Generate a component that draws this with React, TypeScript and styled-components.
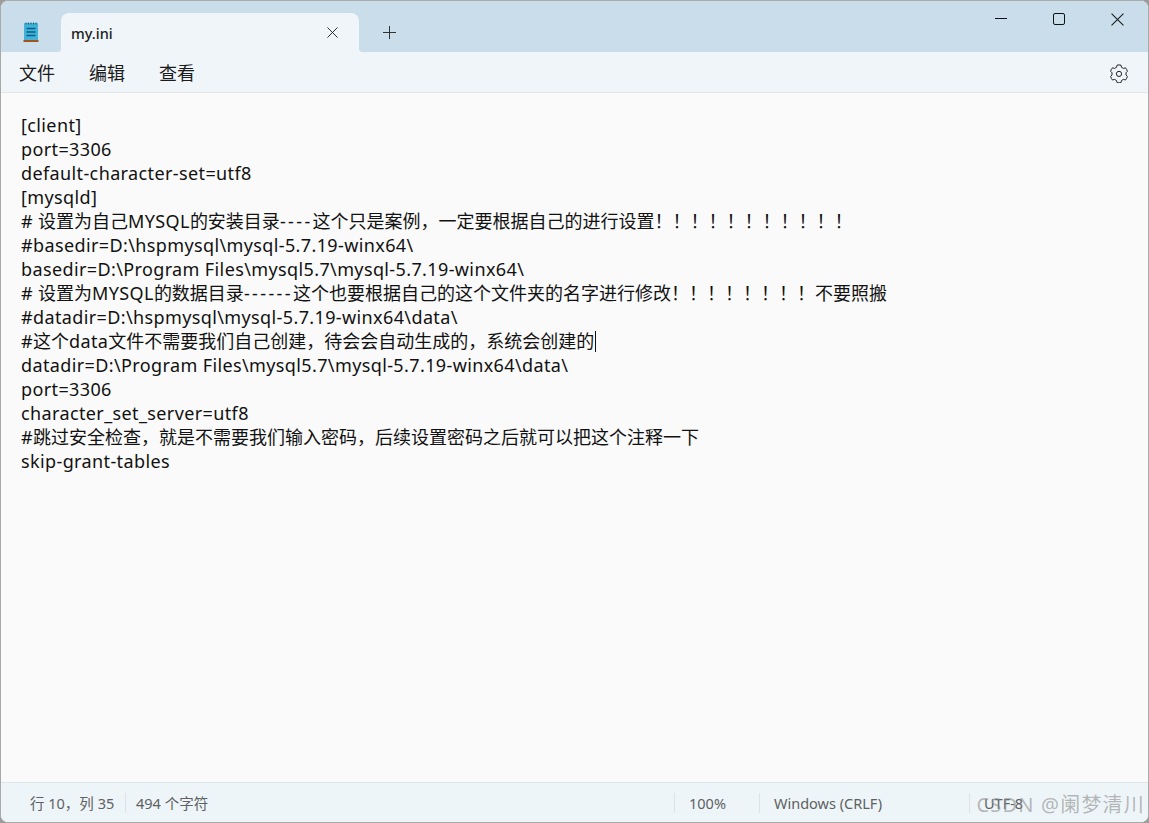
import React from "react";
import styled, { createGlobalStyle } from "styled-components";

const GlobalStyle = createGlobalStyle`
	html, body {
		margin: 0;
		padding: 0;
		background: #9c9c9c;
	}
	* {
		box-sizing: border-box;
	}
`;

const Window = styled.div`
	width: 1149px;
	height: 823px;
	position: relative;
	display: flex;
	flex-direction: column;
	overflow: hidden;
	border: 1px solid #a9a9a9;
	border-radius: 8px;
	background: #fafafa;
	font-family: "Noto Sans", "Open Sans", "Noto Sans CJK SC", sans-serif;
	color: #1b1b1b;
`;

const TitleBar = styled.div`
	height: 51px;
	flex: none;
	display: flex;
	align-items: flex-end;
	background: #c9deea;
`;

const AppIcon = styled.div`
	width: 60px;
	height: 51px;
	flex: none;
	display: flex;
	justify-content: center;
	padding: 21px 1px 0 0;
`;

const Tab = styled.div`
	width: 298px;
	height: 39px;
	flex: none;
	position: relative;
	display: flex;
	align-items: center;
	justify-content: space-between;
	padding: 0 21px 0 10px;
	background: #f0f5f9;
	border-radius: 8px 8px 0 0;
	font-size: 14.5px;
	font-weight: 500;

	&::before,
	&::after {
		content: "";
		position: absolute;
		bottom: 0;
		width: 4px;
		height: 4px;
	}

	&::before {
		left: -4px;
		background: radial-gradient(circle at 0 0, #c9deea 4px, #f0f5f9 4.5px);
	}

	&::after {
		right: -4px;
		background: radial-gradient(circle at 100% 0, #c9deea 4px, #f0f5f9 4.5px);
	}
`;

const NewTab = styled.div`
	width: 60px;
	height: 39px;
	flex: none;
	display: flex;
	align-items: center;
	justify-content: center;
`;

const WindowControls = styled.div`
	margin-left: auto;
	height: 51px;
	display: flex;
	align-items: flex-start;
	padding: 12px 24px 0 0;
	gap: 46px;
`;

const MenuBar = styled.div`
	height: 41px;
	flex: none;
	display: flex;
	align-items: center;
	justify-content: space-between;
	padding: 2px 20px 0 18px;
	background: #f0f5f9;
	border-bottom: 1px solid #e2e6e9;
`;

const MenuItems = styled.div`
	display: flex;
	gap: 34px;
`;

const MenuItem = styled.span`
	font-size: 18px;
	line-height: 24px;
`;

const Editor = styled.div`
	flex: 1;
	padding: 20px 20px 0;
	background: #fafafa;
`;

const Line = styled.div`
	height: 24px;
	font-size: 18px;
	line-height: 24px;
	white-space: pre;
	color: #111;
`;

const LatinRun = styled.span`
	letter-spacing: 0.38px;
`;

const DashRun = styled.span`
	letter-spacing: 2.38px;
`;

const Caret = styled.span`
	display: inline-block;
	width: 1px;
	height: 21px;
	margin-left: 1px;
	vertical-align: -4px;
	background: #111;
`;

const StatusBar = styled.div`
	height: 40px;
	flex: none;
	display: flex;
	align-items: center;
	padding-left: 29px;
	background: #eef5f8;
	border-top: 1px solid #dfe5e7;
	font-size: 14.5px;
	color: #5d6163;
`;

const StatusCell = styled.div<{ $width: number; $pad: number }>`
	width: ${({ $width }) => $width}px;
	height: 20px;
	flex: none;
	display: flex;
	align-items: center;
	padding-left: ${({ $pad }) => $pad}px;
	line-height: 20px;
	white-space: nowrap;

	& + & {
		border-left: 1px solid #dce2e5;
	}
`;

const Watermark = styled.div`
	position: absolute;
	right: 3px;
	bottom: 3px;
	font-size: 20px;
	line-height: 28px;
	letter-spacing: 1.2px;
	white-space: nowrap;
	color: rgba(140, 140, 140, 0.6);
`;

const lines = [
	"[client]",
	"port=3306",
	"default-character-set=utf8",
	"[mysqld]",
	"# 设置为自己MYSQL的安装目录----这个只是案例，一定要根据自己的进行设置！！！！！！！！！！！",
	"#basedir=D:\\hspmysql\\mysql-5.7.19-winx64\\",
	"basedir=D:\\Program Files\\mysql5.7\\mysql-5.7.19-winx64\\",
	"# 设置为MYSQL的数据目录------这个也要根据自己的这个文件夹的名字进行修改！！！！！！！！不要照搬",
	"#datadir=D:\\hspmysql\\mysql-5.7.19-winx64\\data\\",
	"#这个data文件不需要我们自己创建，待会会自动生成的，系统会创建的",
	"datadir=D:\\Program Files\\mysql5.7\\mysql-5.7.19-winx64\\data\\",
	"port=3306",
	"character_set_server=utf8",
	"#跳过安全检查，就是不需要我们输入密码，后续设置密码之后就可以把这个注释一下",
	"skip-grant-tables",
];

// latin text sits a little wider than the cjk glyphs here, dash runs more so
const renderLine = (line: string) =>
	line.split(/([\u4e00-\u9fff，！]+|-{2,})/).map((part, i) => {
		if (i % 2 === 0) return <LatinRun key={i}>{part}</LatinRun>;
		return part.startsWith("-") ? <DashRun key={i}>{part}</DashRun> : part;
	});

const NotepadIcon = () => (
	<svg width="16" height="21" viewBox="0 0 16 21">
		<rect x="1" y="1" width="14" height="18" rx="1" fill="#3fb4d8" />
		<path d="M3 0.5v2M5.5 0.5v2M8 0.5v2M10.5 0.5v2M13 0.5v2" stroke="#1d5f80" />
		<path d="M3.5 6.5h9M3.5 10h9M3.5 13.5h9" stroke="#0d5e86" strokeWidth="1.4" />
		<rect x="0.5" y="18" width="15" height="2" fill="#a5521c" />
	</svg>
);

const CloseIcon = ({ size }: { size: number }) => (
	<svg width={size} height={size} viewBox="0 0 12 12">
		<path d="M0.5 0.5l11 11M11.5 0.5l-11 11" stroke="#1b1b1b" strokeWidth="1" fill="none" />
	</svg>
);

const PlusIcon = () => (
	<svg width="13" height="13" viewBox="0 0 13 13">
		<path d="M6.5 0v13M0 6.5h13" stroke="#333" strokeWidth="1" />
	</svg>
);

const MinimizeIcon = () => (
	<svg width="12" height="12" viewBox="0 0 12 12">
		<path d="M0 5.5h12" stroke="#111" strokeWidth="1" />
	</svg>
);

const MaximizeIcon = () => (
	<svg width="12" height="12" viewBox="0 0 12 12">
		<rect x="0.5" y="0.5" width="11" height="11" rx="1.5" fill="none" stroke="#111" strokeWidth="1" />
	</svg>
);

const GearIcon = () => (
	<svg width="18" height="19" viewBox="0 0 18 19" fill="none" stroke="#222" strokeWidth="1">
		<path d="M7 1.2c1.3-.4 2.7-.4 4 0l.5 2.1 1.9 1.1 2.1-.6c.9 1 1.5 2.2 1.9 3.5L16 8.8v2.2l1.4 1.5c-.4 1.3-1 2.5-1.9 3.5l-2.1-.6-1.9 1.1-.5 2.1c-1.3.4-2.7.4-4 0l-.5-2.1-1.9-1.1-2.1.6c-.9-1-1.5-2.2-1.9-3.5L2 11V8.8L.6 7.3c.4-1.3 1-2.5 1.9-3.5l2.1.6 1.9-1.1z" />
		<circle cx="9" cy="9.9" r="2.6" />
	</svg>
);

function App() {
	return (
		<>
			<GlobalStyle />
			<Window>
				<TitleBar>
					<AppIcon>
						<NotepadIcon />
					</AppIcon>
					<Tab>
						<span>my.ini</span>
						<CloseIcon size={11} />
					</Tab>
					<NewTab>
						<PlusIcon />
					</NewTab>
					<WindowControls>
						<MinimizeIcon />
						<MaximizeIcon />
						<CloseIcon size={13} />
					</WindowControls>
				</TitleBar>
				<MenuBar>
					<MenuItems>
						<MenuItem>文件</MenuItem>
						<MenuItem>编辑</MenuItem>
						<MenuItem>查看</MenuItem>
					</MenuItems>
					<GearIcon />
				</MenuBar>
				<Editor>
					{lines.map((line, i) => (
						<Line key={i}>
							{renderLine(line)}
							{i === 9 && <Caret />}
						</Line>
					))}
				</Editor>
				<StatusBar>
					<StatusCell $width={95} $pad={0}>行 10，列 35</StatusCell>
					<StatusCell $width={549} $pad={10}>494 个字符</StatusCell>
					<StatusCell $width={85} $pad={14}>100%</StatusCell>
					<StatusCell $width={210} $pad={14}>Windows (CRLF)</StatusCell>
					<StatusCell $width={120} $pad={14}>UTF-8</StatusCell>
				</StatusBar>
				<Watermark>CSDN @阑梦清川</Watermark>
			</Window>
		</>
	);
}

export default App;
